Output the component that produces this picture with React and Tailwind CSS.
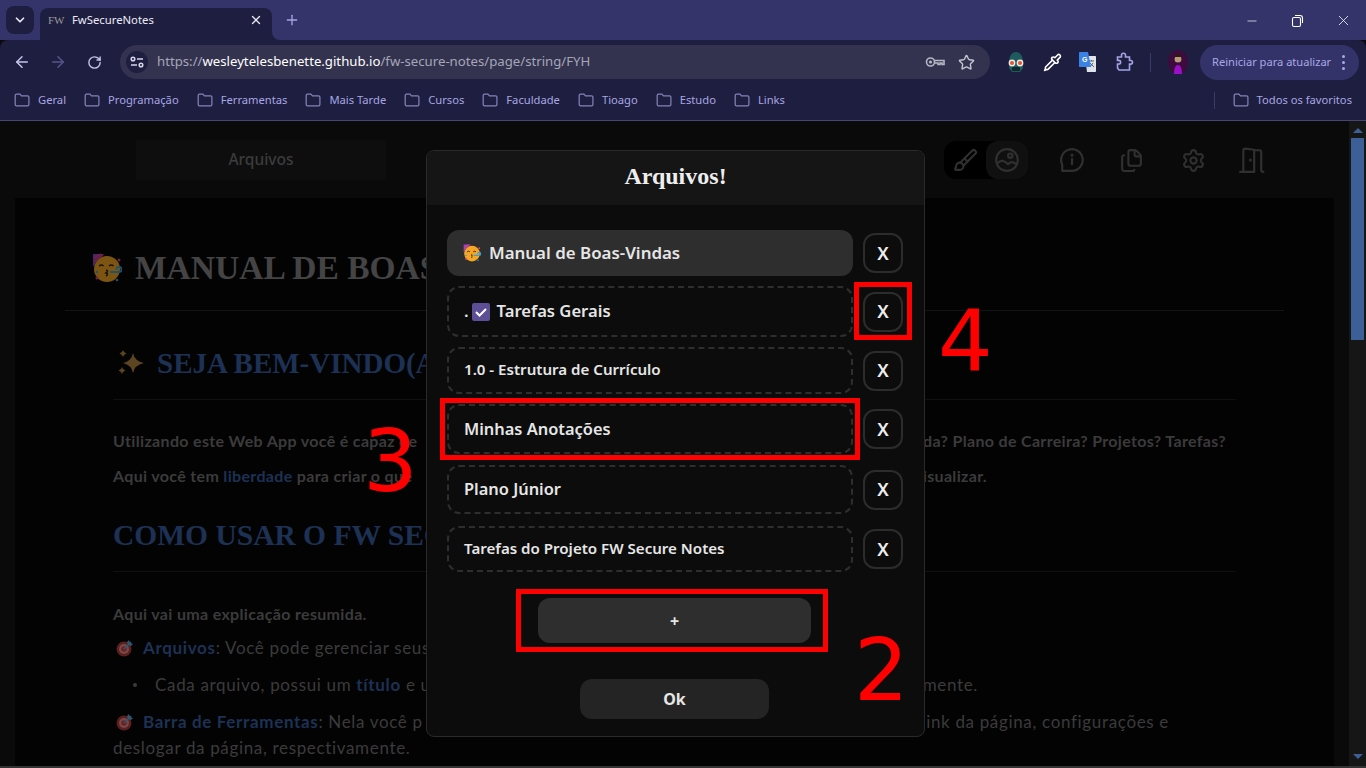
import React from "react";
import { ArrowLeft, ArrowRight, RotateCw, Star, Pipette, Brush, Files, Settings, X, Plus, ChevronDown, Minus } from "lucide-react";

const Folder = ({ c = "#8383b8" }) => (
  <svg width="16" height="14" viewBox="0 0 17 15" fill="none" stroke={c} strokeWidth="1.3" className="shrink-0">
    <path d="M1.2 2.6c0-.8.6-1.4 1.4-1.4h3.7l1.6 1.8h6.6c.8 0 1.400.6 1.400 1.400v8c0 .8-.6 1.400-1.400 1.400H2.600c-.8 0-1.400-.6-1.400-1.400z" />
  </svg>
);

const Party = ({ size = 30 }) => (
  <svg width={size} height={size} viewBox="0 0 30 30" className="shrink-0">
    <circle cx="15" cy="16" r="13" fill="#f5a623" />
    <path d="M1 1h12C8 3 4 8 2 14L1 12z" fill="#8e44c9" />
    <path d="M2 5l7-4M2 9l9-7" stroke="#e0457b" strokeWidth="1.5" />
    <path d="M7 13q2.500-2 4.500 0M17 13q2.500-2 4.500 0" stroke="#3a2508" strokeWidth="1.6" fill="none" />
    <path d="M14 17q3 1 0 3q3 1 0 3" stroke="#3a2508" strokeWidth="1.600" fill="none" />
    <path d="M18 19h9a2.500 2.500 0 1 0-2.500-2.500" stroke="#3aa0d8" strokeWidth="1.800" fill="none" />
    <circle cx="5" cy="25" r="1.500" fill="#e0457b" />
    <circle cx="27" cy="7" r="1.500" fill="#e0457b" />
    <circle cx="25" cy="27" r="1.300" fill="#3aa0d8" />
    <circle cx="5" cy="19" r="1.200" fill="#3aa0d8" />
  </svg>
);

const Sparkles = () => (
  <svg width="28" height="26" viewBox="0 0 28 26" className="shrink-0" fill="#5c4520">
    <path d="M16 3q1.500 8 11 10q-9.500 2-11 10q-1.500-8-10-10q8.500-2 10-10z" />
    <path d="M6 0q.8 3 3.500 3.500q-2.700.5-3.500 3.500q-.8-3-3.500-3.500q2.700-.5 3.500-3.500z" />
    <path d="M5 17q.7 3 3.500 3.500q-2.800.5-3.500 3.500q-.7-3-3.500-3.500q2.800-.5 3.500-3.500z" />
  </svg>
);

const Target = () => (
  <svg width="18" height="18" viewBox="0 0 18 18" className="shrink-0 inline-block align-[-3px]">
    <circle cx="8" cy="10" r="7.500" fill="#5c1f1f" />
    <circle cx="8" cy="10" r="5" fill="#c9c9c9" fillOpacity=".25" />
    <circle cx="8" cy="10" r="2.800" fill="#6d2222" />
    <path d="M8 10l7-7" stroke="#2f5870" strokeWidth="1.600" />
    <path d="M13 1l1 3l3 1l-2 2l-3-1l-1-3z" fill="#2f5870" />
  </svg>
);

const Mask = () => (
  <svg width="20" height="22" viewBox="0 0 20 22" className="shrink-0">
    <path d="M3 11C3 5 6 1 10 1s7 4 7 10v6l-3 4H6l-3-4z" fill="#1f5a5e" />
    <rect x="6" y="16" width="8" height="4" fill="#10292c" />
    <circle cx="6" cy="12" r="3.400" fill="#e8e8e8" />
    <circle cx="14" cy="12" r="3.400" fill="#e8e8e8" />
    <circle cx="6" cy="12" r="2" fill="#e2562f" />
    <circle cx="14" cy="12" r="2" fill="#e2562f" />
  </svg>
);

const Translate = () => (
  <svg width="17" height="20" viewBox="0 0 17 20" className="shrink-0">
    <path d="M6 4h10c.6 0 1 .4 1 1v14c0 .6-.4 1-1 1H8z" fill="#dfe3ea" />
    <path d="M10 9h5M12.500 8v1M11 15l3-4M11 11l4 4" stroke="#60646c" strokeWidth="1" />
    <path d="M1 0h8l3 15H1c-.6 0-1-.4-1-1V1c0-.6.4-1 1-1z" fill="#3b82e6" />
    <text x="3" y="10" fontSize="7" fontWeight="700" fill="#fff" fontFamily="Liberation Sans">G</text>
  </svg>
);

const ExtPuzzle = () => (
  <svg width="18" height="20" viewBox="0 0 18 20" fill="none" stroke="#a4a4e4" strokeWidth="1.600" className="shrink-0">
    <path d="M1.500 5h4V3.300a2 2 0 0 1 4 0V5h4v3.500h1.200a1.800 1.800 0 0 1 0 3.600h-1.200V18H3l-1.500-2v-4h1.300a1.800 1.800 0 0 0 0-3.600H1.500z" />
  </svg>
);

const Avatar = () => (
  <svg width="20" height="24" viewBox="0 0 20 24" className="shrink-0">
    <ellipse cx="10" cy="12" rx="10" ry="12" fill="#3d0b3d" />
    <path d="M6 24q0-9 4-9t4 9z" fill="#9a10c8" />
    <circle cx="10" cy="9" r="3.500" fill="#b79a7c" />
    <path d="M6 10q0-6 4-6t4 6l-1-3H7z" fill="#2a1c14" />
  </svg>
);

const Key = () => (
  <svg width="20" height="12" viewBox="0 0 20 12" fill="none" stroke="#b6b6c4" strokeWidth="1.600" className="shrink-0">
    <circle cx="5.500" cy="6" r="4" />
    <path d="M9.500 4.500h9.500v4h-2v-1.500h-2v1.500h-2v-1.500h-3.500" />
    <circle cx="5.500" cy="6" r=".8" fill="#b6b6c4" />
  </svg>
);

const Tune = () => (
  <svg width="14" height="12" viewBox="0 0 14 12" fill="none" stroke="#d6d6e6" strokeWidth="1.500">
    <circle cx="3" cy="3" r="1.800" />
    <path d="M7 3h6M1 9h6" />
    <circle cx="11" cy="9" r="1.800" />
  </svg>
);

const dim = "#303030";

const ImageCircle = () => (
  <svg width="26" height="26" viewBox="0 0 24 24" fill="none" stroke={dim} strokeWidth="2" strokeLinecap="round" strokeLinejoin="round">
    <circle cx="12" cy="12" r="10" />
    <circle cx="15" cy="8" r="2" />
    <path d="M3 15q3-3 5.500-2t4.500 3q2-2 3.500-2t4.500 2" />
  </svg>
);

const InfoBubble = () => (
  <svg width="26" height="26" viewBox="0 0 24 24" fill="none" stroke={dim} strokeWidth="2" strokeLinecap="round" strokeLinejoin="round">
    <path d="M3 22h9a10 10 0 1 0-9-5.500z" />
    <path d="M12 11v5" />
    <circle cx="12" cy="7.500" r=".6" fill={dim} />
  </svg>
);

const Door = () => (
  <svg width="26" height="26" viewBox="0 0 24 24" fill="none" stroke={dim} strokeWidth="2" strokeLinecap="round" strokeLinejoin="round">
    <path d="M1 23h13V2.500L6 1.500c-1 0-2 .7-2 2V23" />
    <path d="M14 3h5c1 0 1.500.7 1.500 1.700V21c0 1.200.8 2 2 2" />
    <circle cx="10.500" cy="12" r=".5" fill={dim} />
  </svg>
);

const Bookmark = ({ label }) => (
  <div className="flex items-center gap-2">
    <Folder />
    <span className="whitespace-nowrap text-[11.200px] text-[#a7a7e2]">{label}</span>
  </div>
);

const marks = ["Geral", "Programação", "Ferramentas", "Mais Tarde", "Cursos", "Faculdade", "Tioago", "Estudo", "Links"];

const Row = ({ h, mt = "", active, size = "text-[16.600px]", children }) => (
  <div className={`flex items-center gap-[10px] ${mt}`}>
    <div className={`flex w-[406px] items-center rounded-xl font-semibold text-[#e6e6e6] ${size} ${h} ${active ? "bg-[#2e2e2e] px-4" : "border-2 border-dashed border-[#2e2e2e] px-[15px]"}`}>
      {children}
    </div>
    <div className="flex h-10 w-10 shrink-0 items-center justify-center rounded-xl border-2 border-[#2c2c2c] text-[18px] font-semibold text-[#eeeeee]">X</div>
  </div>
);

const Line = ({ left, right, cls = "" }) => (
  <div className={`flex items-center justify-between whitespace-nowrap ${cls}`}>
    <span className="flex items-center">{left}</span>
    <span>{right}</span>
  </div>
);

const B = ({ children }) => <span className="font-bold text-[#1d3154]">{children}</span>;

const smallText = "text-[16px] font-bold tracking-[0.33px]";
const bigText = "text-[17px] tracking-[0.66px]";

export default function App() {
  return (
    <div className="relative flex h-[768px] w-[1366px] flex-col overflow-hidden bg-[#0a0a0a] font-['Noto_Sans',sans-serif]">
      {/* Browser tab strip */}
      <div className="flex h-10 shrink-0 items-start bg-[#35346a] pl-[6px]">
        <div className="mt-[6px] flex h-[28px] w-[28px] items-center justify-center rounded-lg bg-[#1e1e40]">
          <ChevronDown size={14} strokeWidth={3} color="#e8e8f4" />
        </div>
        <div className="ml-[6px] mt-2 flex h-8 w-[232px] items-center rounded-t-lg bg-[#1e1e40] pb-2 pl-2 pr-2">
          <span className="w-[24px] font-['Liberation_Serif',serif] text-[11px] text-[#9a9a9a]">FW</span>
          <span className="text-[11.300px] text-[#ececf6]">FwSecureNotes</span>
          <X size={14} strokeWidth={2.2} color="#e8e8f4" className="ml-auto mr-[1px]" />
        </div>
        <Plus size={16} strokeWidth={2} color="#a4a4e4" className="ml-3 mt-3" />
        <div className="ml-auto mr-[14px] mt-3 flex items-center gap-[31px] text-white">
          <Minus size={14} strokeWidth={1.2} />
          <svg width="14" height="14" viewBox="0 0 14 14" fill="none" stroke="#fff" strokeWidth="1.100">
            <rect x="2.500" y="3.500" width="8" height="9" rx="1.500" />
            <path d="M5 1.500h5c1.500 0 2.500 1 2.500 2.500v5" />
          </svg>
          <X size={17} strokeWidth={1.1} />
        </div>
      </div>
      <div className="absolute left-[272px] top-[32px] h-2 w-2 bg-[#1e1e40]">
        <div className="h-2 w-2 rounded-bl-lg bg-[#35346a]" />
      </div>

      {/* Toolbar */}
      <div className="flex h-[44px] shrink-0 items-center rounded-t-lg bg-[#1e1e40] pl-[13px]">
        <ArrowLeft size={18} color="#c6c6ea" />
        <ArrowRight size={18} color="#55558c" className="ml-[18px]" />
        <RotateCw size={15} strokeWidth={2.2} color="#c6c6ea" className="ml-[20px]" />
        <div className="ml-[18px] flex h-[34px] w-[870px] items-center rounded-full bg-[#33334f] pl-[6px] pr-[15px]">
          <div className="flex h-[22px] w-[22px] items-center justify-center rounded-full bg-[#1e1e40]"><Tune /></div>
          <span className="ml-[9px] text-[13.200px] text-[#a6a6b8]">https://<span className="text-white">wesleytelesbenette.github.io</span>/fw-secure-notes/page/string/FYH</span>
          <div className="ml-auto flex items-center gap-[13px]">
            <Key />
            <Star size={17} color="#c4c4d0" strokeWidth={2} />
          </div>
        </div>
        <div className="ml-4 flex items-center">
          <Mask />
          <Pipette size={19} color="#ffffff" strokeWidth={2} className="ml-[17px]" />
          <div className="ml-[17px]"><Translate /></div>
          <div className="ml-[20px]"><ExtPuzzle /></div>
          <div className="ml-[16px] h-[19px] w-px bg-[#3a3a68]" />
          <div className="ml-[17px]"><Avatar /></div>
        </div>
        <div className="ml-[12px] flex h-[35px] w-[159px] items-center rounded-full bg-[#33336a] pl-3">
          <span className="whitespace-nowrap text-[11.100px] text-[#a9a9e2]">Reiniciar para atualizar</span>
          <div className="ml-auto mr-[14px] flex flex-col gap-[3px]">
            <span className="h-[3px] w-[3px] rounded-full bg-[#a9a9e2]" />
            <span className="h-[3px] w-[3px] rounded-full bg-[#a9a9e2]" />
            <span className="h-[3px] w-[3px] rounded-full bg-[#a9a9e2]" />
          </div>
        </div>
      </div>

      {/* Bookmarks */}
      <div className="flex h-[37px] shrink-0 items-center gap-[18px] border-b border-[#46466f] bg-[#1e1e40] pb-1 pl-[14px] pr-[14px]">
        {marks.map((m) => <Bookmark key={m} label={m} />)}
        <div className="ml-auto h-[17px] w-px bg-[#3a3a68]" />
        <Bookmark label="Todos os favoritos" />
      </div>

      {/* Page */}
      <div className="flex min-h-0 flex-1">
        <div className="flex min-w-0 flex-1 flex-col overflow-hidden">
          <div className="flex h-[77px] shrink-0 items-start">
            <div className="ml-[136px] mt-[19px] flex h-10 w-[250px] items-center justify-center bg-[#0e0e0e] text-[15.500px] font-medium text-[#3c3c3c]">Arquivos</div>
            <div className="ml-auto mr-[84px] mt-[20px] flex items-center">
              <div className="flex h-[38px] w-[84px] rounded-xl bg-black">
                <div className="flex w-[42px] items-center justify-center"><Brush size={25} color={dim} strokeWidth={2} /></div>
                <div className="flex w-[42px] items-center justify-center rounded-xl bg-[#101010]"><ImageCircle /></div>
              </div>
              <div className="ml-[31px]"><InfoBubble /></div>
              <Files size={25} color={dim} strokeWidth={2} className="ml-[34px]" />
              <Settings size={25} color={dim} strokeWidth={2} className="ml-[37px]" />
              <div className="ml-[33px]"><Door /></div>
            </div>
          </div>
          <div className="mx-[15px] flex-1 bg-[#030303] px-[50px] pt-[50px] font-['Lato',sans-serif] text-[#3b3b3b]">
            <div className="flex h-[63px] items-start gap-[13px] border-b border-[#121417] pl-[27px]">
              <div className="mt-[5px] opacity-50"><Party /></div>
              <h1 className="whitespace-nowrap font-['Liberation_Serif',serif] text-[33.500px] font-bold uppercase leading-[40px] text-[#444444]">Manual de Boas</h1>
            </div>
            <div className="mx-[48px]">
              <div className="mt-[30px] flex h-[59px] items-start gap-[12px] border-b border-[#101010] pl-[4px] pt-[9px]">
                <Sparkles />
                <h2 className="whitespace-nowrap font-['Liberation_Serif',serif] text-[29px] font-bold uppercase leading-[26px] text-[#1d3154]">Seja bem-vindo(a</h2>
              </div>
              <Line cls={`mt-[23px] h-[35px] pr-[10px] ${smallText}`} left="Utilizando este Web App você é capaz de" right="da? Plano de Carreira? Projetos? Tarefas?" />
              <Line cls={`h-[35px] pr-[249px] ${smallText}`} left={<span>Aqui você tem <B>liberdade</B> para criar o que</span>} right="isualizar." />
              <div className="mt-[20px] h-[59px] border-b border-[#101010] pt-[6px]">
                <h2 className="whitespace-nowrap font-['Liberation_Serif',serif] text-[29.500px] font-bold uppercase leading-[32px] text-[#1d3154]">Como usar o FW Sec</h2>
              </div>
              <p className={`mt-[26px] flex h-8 items-center ${smallText}`}>Aqui vai uma explicação resumida.</p>
              <p className={`flex h-[36px] items-center gap-[9px] whitespace-nowrap ${bigText}`}><span className="ml-[3px] flex"><Target /></span><span><B>Arquivos</B>: Você pode gerenciar seus</span></p>
              <Line cls={`h-[38px] pl-[20px] pr-[258px] ${bigText}`} left={<><span className="mr-[18px] h-[4px] w-[4px] rounded-full bg-[#3b3b3b]" /><span>Cada arquivo, possui um <B>título</B> e u</span></>} right="mente." />
              <Line cls={`h-[36px] pr-[67px] ${bigText}`} left={<span className="flex items-center gap-[9px]"><span className="ml-[3px] flex"><Target /></span><span><B>Barra de Ferramentas</B>: Nela você p</span></span>} right="link da página, configurações e" />
              <p className={`flex h-[15px] items-center whitespace-nowrap ${bigText}`}>deslogar da página, respectivamente.</p>
            </div>
          </div>
        </div>
        <div className="flex w-[17px] shrink-0 flex-col items-center bg-[#161616]">
          <div className="mt-[7px] h-0 w-0 border-x-[5px] border-b-[5px] border-x-transparent border-b-[#3b5f96]" />
          <div className="mt-[5px] h-[202px] w-[13px] bg-[#3b5f96]" />
          <div className="mb-[7px] mt-auto h-0 w-0 border-x-[5px] border-t-[5px] border-x-transparent border-t-[#3b5f96]" />
        </div>
      </div>
      <div className="h-[2px] shrink-0 bg-[#333333]" />

      {/* Modal */}
      <div className="absolute left-[426px] top-[150px] flex h-[587px] w-[499px] flex-col overflow-hidden rounded-lg border border-[#2a2a2a] bg-[#0c0c0c]">
        <div className="flex h-[54px] shrink-0 items-center justify-center bg-[#151515] pb-[5px] font-['Liberation_Serif',serif] text-[24px] font-bold text-[#eeeeee]">Arquivos!</div>
        <div className="flex flex-col gap-[10px] px-5 pt-[25px]">
          <Row h="h-[46px]" size="text-[16.900px]" active>
            <span className="mr-[8px]"><Party size={18} /></span>Manual de Boas-Vindas
          </Row>
          <Row h="h-[51px]">
            <span>.</span>
            <svg width="18" height="18" viewBox="0 0 18 18" className="ml-[3px] mr-[7px] shrink-0">
              <rect width="18" height="18" rx="2" fill="#5c4f96" />
              <path d="M4 9l3.500 3.500L14 6" stroke="#fff" strokeWidth="2" fill="none" />
            </svg>
            Tarefas Gerais
          </Row>
          <Row h="h-[47px]" size="pb-[2px] text-[15.100px]">1.0 - Estrutura de Currículo</Row>
          <Row h="h-[50px]" size="text-[16.400px]">Minhas Anotações</Row>
          <Row h="h-[49px]" mt="mt-px" size="text-[16.400px]">Plano Júnior</Row>
          <Row h="h-[46px]" mt="mt-[2px]" size="pb-[2px] text-[15.100px]">Tarefas do Projeto FW Secure Notes</Row>
        </div>
        <div className="ml-[111px] mt-[26px] flex h-[45px] w-[273px] shrink-0 items-center justify-center rounded-xl bg-[#2e2e2e] text-[16px] font-bold text-[#e6e6e6]">+</div>
        <div className="ml-[153px] mt-[36px] flex h-10 w-[189px] shrink-0 items-center justify-center rounded-xl bg-[#242424] text-[16px] font-bold text-[#e6e6e6]">Ok</div>
      </div>

      {/* Red annotations */}
      <div className="absolute left-[854px] top-[282px] h-[58px] w-[58px] border-[5px] border-[#ff0000]" />
      <div className="absolute left-[440px] top-[398px] h-[62px] w-[420px] border-[5px] border-[#ff0000]" />
      <div className="absolute left-[516px] top-[589px] h-[63px] w-[312px] border-[5px] border-[#ff0000]" />
      <div className="absolute left-[938px] top-[289px] font-['DejaVu_Sans',sans-serif] text-[86px] leading-[104px] text-[#ff0000]">4</div>
      <div className="absolute left-[363px] top-[409px] font-['DejaVu_Sans',sans-serif] text-[86px] leading-[104px] text-[#ff0000]">3</div>
      <div className="absolute left-[854px] top-[618px] font-['DejaVu_Sans',sans-serif] text-[86px] leading-[104px] text-[#ff0000]">2</div>
    </div>
  );
}
